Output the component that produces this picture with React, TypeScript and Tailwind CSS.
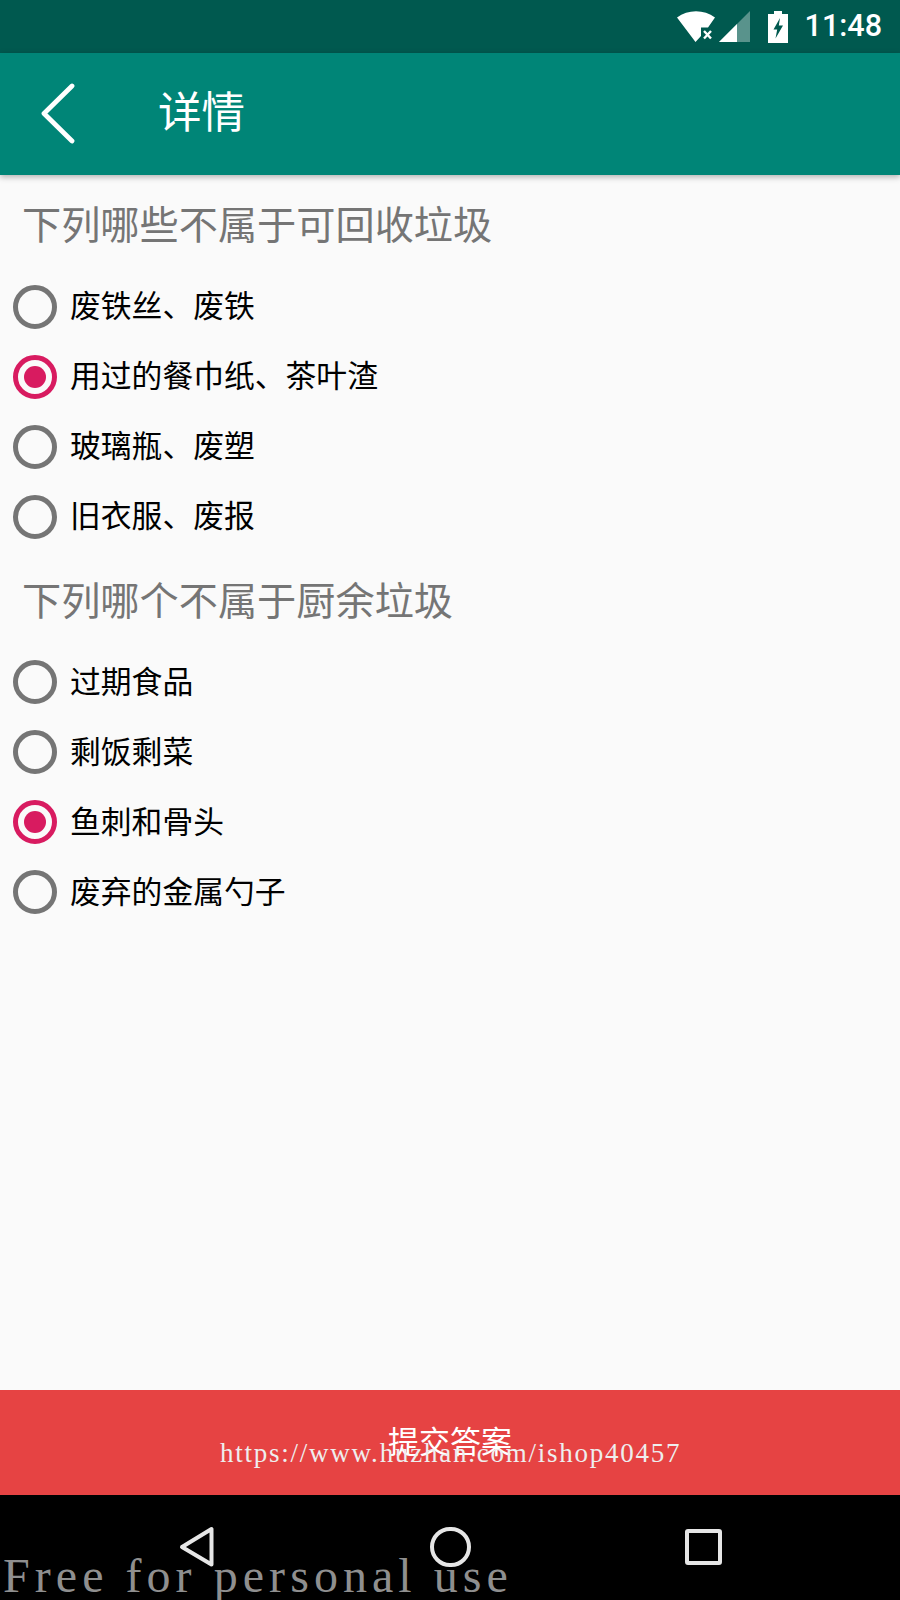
const cjk = "font-['Roboto','Noto_Sans_CJK_SC',sans-serif]";

function WifiOff() {
  return (
    <svg width="38" height="32" viewBox="0 0 38 32" className="shrink-0">
      <path d="M0 6.5 C11 -2 27 -2 38 6.5 L31 16.5 H24 V25 L18.5 31 Z" fill="#fff" />
      <path d="M27 20 L34 27.5 M34 20 L27 27.5" stroke="#fff" strokeWidth="2.4" />
    </svg>
  );
}

function Signal() {
  return (
    <svg width="31" height="32" viewBox="0 0 31 32" className="shrink-0">
      <path d="M31 0 V31 H0 Z" fill="#fff" fillOpacity="0.35" />
      <path d="M18 13 V31 H0 Z" fill="#fff" />
    </svg>
  );
}

function Battery() {
  return (
    <svg width="20" height="32" viewBox="0 0 20 32" className="shrink-0">
      <path d="M6 0 H14 V3 H20 V32 H0 V3 H6 Z" fill="#fff" />
      <path d="M12 7 L5.5 18.5 H9.2 L7.5 27.5 L15 14.5 H10.8 Z" fill="#00594f" />
    </svg>
  );
}

function Radio({ checked }: { checked: boolean }) {
  return (
    <span
      className={`flex h-[44px] w-[44px] shrink-0 items-center justify-center rounded-full border-[5px] ${
        checked ? "border-[#d81b60]" : "border-[#757575]"
      }`}
    >
      {checked && <span className="block h-[22px] w-[22px] rounded-full bg-[#d81b60]" />}
    </span>
  );
}

function Question({ title, options, selected }: { title: string; options: string[]; selected: number }) {
  return (
    <section>
      <h2 className="h-[56px] pl-[22px] text-[39.2px] leading-[56px] font-normal text-[#757575]">{title}</h2>
      <ul className="mt-[17.5px] flex flex-col">
        {options.map((opt, i) => (
          <li key={opt} className="flex h-[70px] items-center gap-[13px] pl-[13px]">
            <Radio checked={i === selected} />
            <span className="pt-[1px] text-[30.8px] leading-[44px] text-black">{opt}</span>
          </li>
        ))}
      </ul>
    </section>
  );
}

export default function App() {
  return (
    <div className={`relative flex h-[1600px] w-[900px] flex-col overflow-hidden bg-[#fafafa] ${cjk}`}>
      <header className="flex h-[53px] shrink-0 items-center justify-end bg-[#00594f] pr-[18px]">
        <WifiOff />
        <span className="ml-[4px] mr-[18px]"><Signal /></span>
        <Battery />
        <span className="ml-[17px] text-[30.5px] leading-none font-medium text-white">11:48</span>
      </header>

      <div className="z-10 flex h-[122px] shrink-0 items-center bg-[#008577] shadow-[0_2px_6px_rgba(0,0,0,0.3)]">
        <svg width="38" height="62" viewBox="0 0 38 62" className="ml-[40px] shrink-0">
          <path d="M32 3 L4 30.5 L32 58" fill="none" stroke="#fff" strokeWidth="4.8" strokeLinecap="round" strokeLinejoin="round" />
        </svg>
        <h1 className="ml-[80px] text-[43.5px] leading-none font-normal text-white">详情</h1>
      </div>

      <main className="flex flex-1 flex-col gap-[22px] pt-[23px]">
        <Question
          title="下列哪些不属于可回收垃圾"
          options={["废铁丝、废铁", "用过的餐巾纸、茶叶渣", "玻璃瓶、废塑", "旧衣服、废报"]}
          selected={1}
        />
        <Question
          title="下列哪个不属于厨余垃圾"
          options={["过期食品", "剩饭剩菜", "鱼刺和骨头", "废弃的金属勺子"]}
          selected={2}
        />
      </main>

      <button className="flex h-[105px] shrink-0 items-start justify-center bg-[#e64343] pt-[31px] text-[31px] leading-[44px] text-white">
        提交答案
      </button>

      <nav className="relative h-[105px] shrink-0 bg-black">
        <svg width="36" height="42" viewBox="0 0 36 42" className="absolute left-[179px] top-[31px]">
          <path d="M32.5 3 V38.5 L3 21 Z" fill="none" stroke="#e6e6e6" strokeWidth="4" strokeLinejoin="round" />
        </svg>
        <span className="absolute left-[430px] top-[32px] h-[40px] w-[41px] rounded-full border-[4px] border-[#e6e6e6]" />
        <span className="absolute left-[685px] top-[34px] h-[36px] w-[37px] rounded-[3px] border-[4px] border-[#e6e6e6]" />
      </nav>

      {/* site stamps printed across the bottom of the screen */}
      <span className="absolute left-[220px] top-[1438px] font-['Liberation_Serif',serif] text-[27px] leading-[30px] tracking-[1.76px] whitespace-nowrap text-[#eeeeee]">
        https://www.huzhan.com/ishop40457
      </span>
      <span className="absolute left-[3px] top-[1552px] font-['Liberation_Serif',serif] text-[48px] leading-[48px] tracking-[5.05px] whitespace-nowrap text-[#8f8f8f]">
        Free for personal use
      </span>
    </div>
  );
}
